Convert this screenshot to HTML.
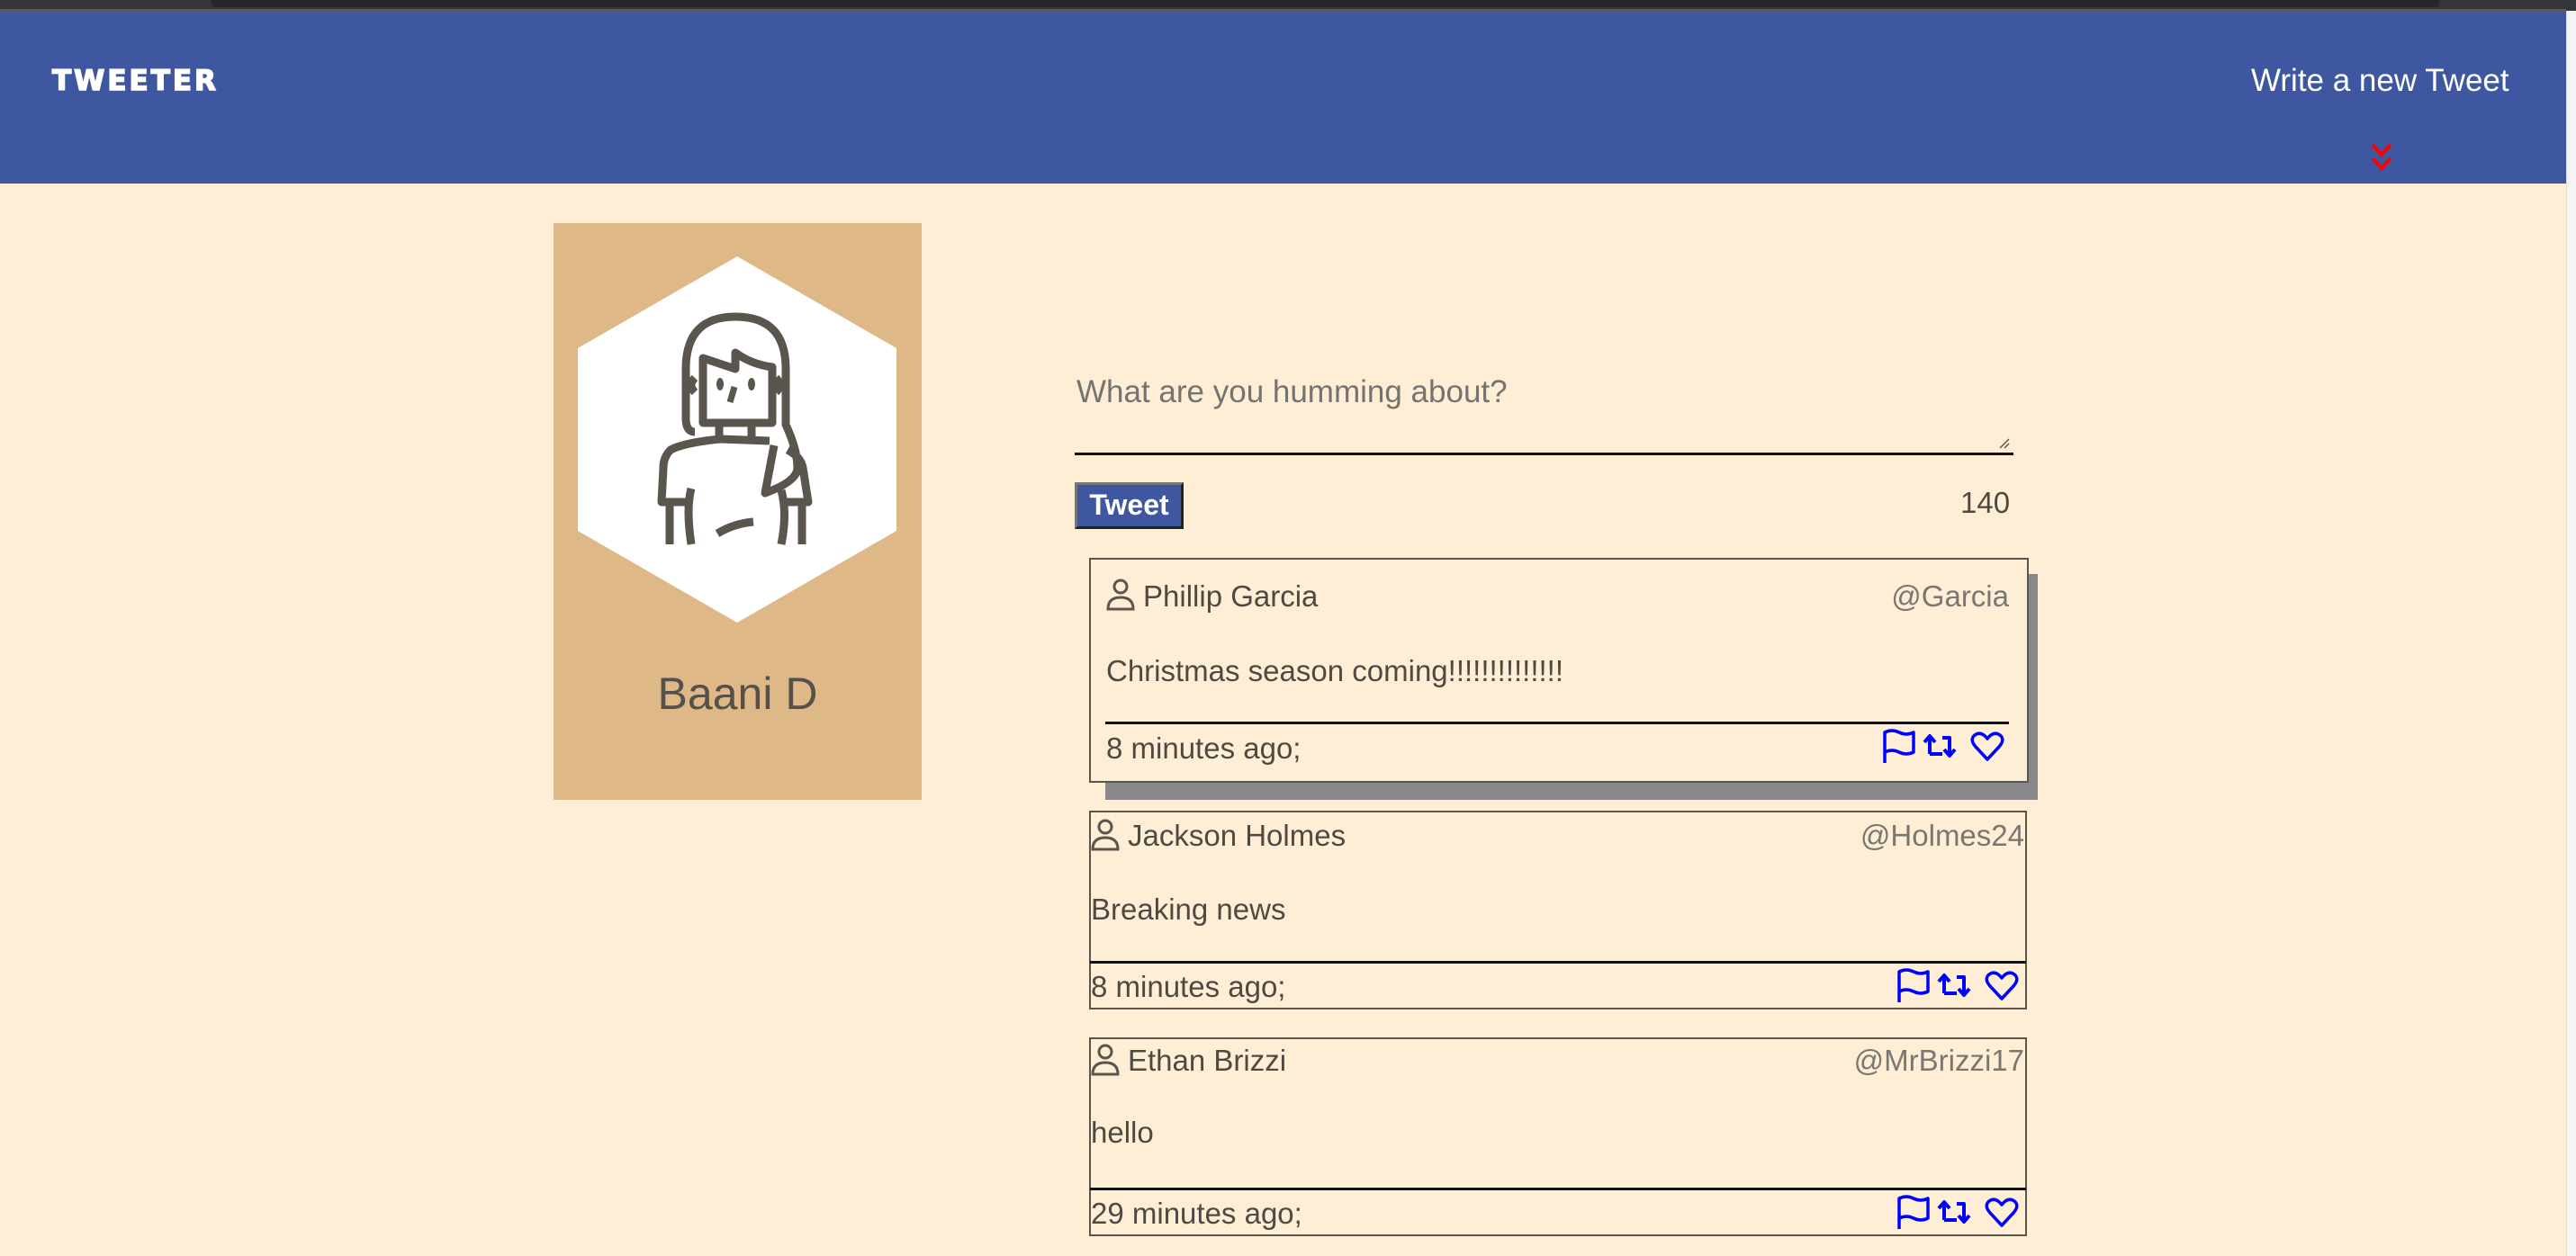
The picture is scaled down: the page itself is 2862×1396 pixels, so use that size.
<!DOCTYPE html>
<html><head><meta charset="utf-8"><style>
*{margin:0;padding:0;box-sizing:border-box}
html,body{width:2862px;height:1396px;overflow:hidden;background:#ffeed6;font-family:"Liberation Sans",sans-serif;color:#4e4a42}
.a{position:absolute;white-space:nowrap}
.card{position:absolute;border:2px solid #5a554d;background:#ffeed6}
.nm{font-size:33px;color:#4e4a42}
.hd{font-size:33px;color:#7a7773}
.tx{font-size:33px;color:#4e4a42}
.ln{position:absolute;height:3px;background:#111}
</style></head><body>
<div class="a" style="left:0;top:0;width:2862px;height:12px;background:#343538"></div>
<div class="a" style="left:235px;top:0;width:2475px;height:8px;background:#26272a;border-radius:0 0 4px 4px"></div>
<div class="a" style="left:0;top:10px;width:2851px;height:3px;background:#5a5a5a"></div>
<div class="a" style="left:0;top:13px;width:2851px;height:191px;background:#3f57a0"></div>
<div class="a" style="left:2851px;top:12px;width:11px;height:1384px;background:#f4f4f4;border-left:1px solid #ddd"></div>
<div class="a" style="left:58px;top:72px;font-size:31px;font-weight:bold;color:#fff;letter-spacing:3px;font-family:'DejaVu Sans',sans-serif;-webkit-text-stroke:1.5px #fff">TWEETER</div>
<div class="a" style="left:2501px;top:70px;font-size:35px;color:#fff;">Write a new Tweet</div>
<svg class="a" style="left:2632px;top:158px" width="28" height="34" viewBox="0 0 28 34"><path d="M4 3 L14 14 L24 3 M4 18 L14 29 L24 18" fill="none" stroke="#f00" stroke-width="4"/></svg>

<div class="a" style="left:615px;top:248px;width:409px;height:641px;background:#dfb887"></div>
<svg class="a" style="left:642px;top:285px" width="354" height="407" viewBox="0 0 354 407"><polygon points="177,0 354,102 354,305 177,407 0,305 0,102" fill="#fff"/></svg>
<svg class="a" style="left:700px;top:320px" width="240" height="300" viewBox="0 0 240 300"><g fill="none" stroke="#5a554d" stroke-width="9" stroke-linejoin="round" stroke-linecap="butt">
<path d="M72 160 Q62 160 62 145 L62 90 Q62 32 117 32 Q173 32 173 90 L173 152 Q186 180 186 200 Q186 215 150 228 L160 175"/>
<path d="M81 150 L81 78 L117 90 L117 72 Q135 85 158 88 L158 150 Z"/>
<path d="M72 100 Q64 108 72 116 M162 100 Q170 108 162 116"/>
<path d="M99 150 L99 166 M135 150 L135 166"/>
<path d="M155 170 L100 168 Q60 172 45 180 Q37 188 37 200 L35 238 L65 238 M175 180 Q190 188 192 200 L198 238 L168 238"/>
<path d="M44 238 L44 285 M68 223 Q62 245 68 285 M191 238 L191 285 M168 225 Q175 250 168 285"/>
<path d="M97 273 Q115 262 137 260"/>
</g>
<ellipse cx="100" cy="107" rx="4" ry="7" fill="#5a554d"/><ellipse cx="135" cy="107" rx="4" ry="7" fill="#5a554d"/><path d="M116 110 L111 127" stroke="#5a554d" stroke-width="7"/>
</svg>
<div class="a" style="left:615px;width:409px;top:742px;text-align:center;font-size:50px;color:#55514a">Baani D</div>

<div class="a" style="left:1196px;top:416px;font-size:35px;color:#757370">What are you humming about?</div>
<div class="ln" style="left:1194px;top:503px;width:1043px"></div>
<svg class="a" style="left:2220px;top:485px" width="14" height="14"><path d="M2 13 L12 3 M7 13 L12 8" stroke="#555" stroke-width="1.5"/></svg>
<div class="a" style="left:1194px;top:536px;width:121px;height:52px;background:#3f57a0;border:3px solid;border-color:#777 #222 #222 #777;color:#fff;font-weight:bold;font-size:32px;text-align:center;line-height:44px;font-family:'Liberation Sans Narrow','Liberation Sans',sans-serif">Tweet</div>
<div class="a" style="left:2178px;top:540px;font-size:33px;color:#4e4a42">140</div>

<!-- tweet 1 -->
<div class="a" style="left:1228px;top:638px;width:1036px;height:251px;background:#888"></div>
<div class="card" style="left:1210px;top:620px;width:1044px;height:250px"></div>
<svg class="a" style="left:1228px;top:642px" width="34" height="40" viewBox="0 0 34 40"><circle cx="17" cy="10" r="7" fill="none" stroke="#5a554d" stroke-width="3"/><path d="M3 35 Q3 22 17 22 Q31 22 31 35 Z" fill="none" stroke="#5a554d" stroke-width="3"/></svg>
<div class="a nm" style="left:1270px;top:644px">Phillip Garcia</div>
<div class="a hd" style="right:630px;top:644px">@Garcia</div>
<div class="a tx" style="left:1229px;top:727px">Christmas season coming!!!!!!!!!!!!!!</div>
<div class="ln" style="left:1228px;top:802px;width:1004px"></div>
<div class="a tx" style="left:1229px;top:813px">8 minutes ago;</div>

<!-- tweet 2 -->
<div class="card" style="left:1210px;top:901px;width:1042px;height:221px"></div>
<svg class="a" style="left:1211px;top:909px" width="34" height="40" viewBox="0 0 34 40"><circle cx="17" cy="10" r="7" fill="none" stroke="#5a554d" stroke-width="3"/><path d="M3 35 Q3 22 17 22 Q31 22 31 35 Z" fill="none" stroke="#5a554d" stroke-width="3"/></svg>
<div class="a nm" style="left:1253px;top:910px">Jackson Holmes</div>
<div class="a hd" style="right:613px;top:910px">@Holmes24</div>
<div class="a tx" style="left:1212px;top:992px">Breaking news</div>
<div class="ln" style="left:1211px;top:1068px;width:1040px"></div>
<div class="a tx" style="left:1212px;top:1078px">8 minutes ago;</div>

<!-- tweet 3 -->
<div class="card" style="left:1210px;top:1153px;width:1042px;height:221px"></div>
<svg class="a" style="left:1211px;top:1159px" width="34" height="40" viewBox="0 0 34 40"><circle cx="17" cy="10" r="7" fill="none" stroke="#5a554d" stroke-width="3"/><path d="M3 35 Q3 22 17 22 Q31 22 31 35 Z" fill="none" stroke="#5a554d" stroke-width="3"/></svg>
<div class="a nm" style="left:1253px;top:1160px">Ethan Brizzi</div>
<div class="a hd" style="right:613px;top:1160px">@MrBrizzi17</div>
<div class="a tx" style="left:1212px;top:1240px">hello</div>
<div class="ln" style="left:1211px;top:1320px;width:1040px"></div>
<div class="a tx" style="left:1212px;top:1330px">29 minutes ago;</div>

<!-- icons -->
<svg width="0" height="0" style="position:absolute"><defs>
<g id="ic" fill="none" stroke="#0000ff" stroke-width="3.5" stroke-linejoin="round">
<path d="M4 38 L4 4 Q12 0 20 4 Q28 8 36 4 L36 26 Q28 30 20 26 Q12 22 4 26"/>
<path d="M54 28 L54 10 M48 15 L54 8 L60 15 M54 28 L68 28" stroke-width="4"/>
<path d="M68 10 L76 10 L76 28 M70 23 L76 30 L82 23" stroke-width="4"/>
<path d="M118 34 L105 20 Q98 12 104 7 Q111 2 118 11 Q125 2 132 7 Q138 12 131 20 Z"/>
</g></defs></svg>
<svg class="a" style="left:2090px;top:810px" width="142" height="40"><use href="#ic"/></svg>
<svg class="a" style="left:2106px;top:1076px" width="142" height="40"><use href="#ic"/></svg>
<svg class="a" style="left:2106px;top:1328px" width="142" height="40"><use href="#ic"/></svg>
</body></html>
